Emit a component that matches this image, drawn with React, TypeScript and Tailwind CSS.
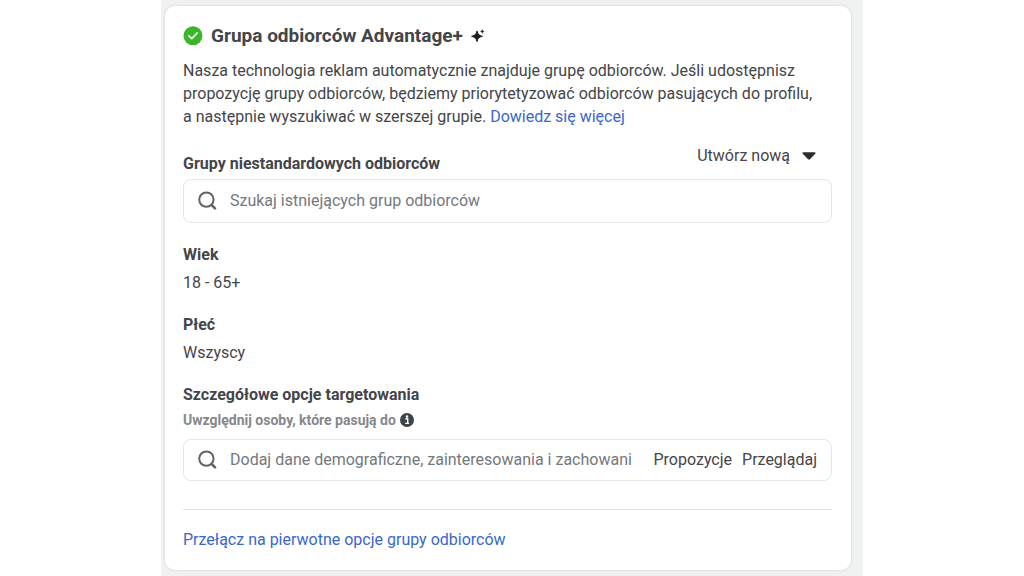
import React from "react";

function SearchIcon() {
  return (
    <svg viewBox="0 0 20 20" className="size-5 shrink-0" fill="none" stroke="#606469" aria-hidden="true">
      <circle cx="8.4" cy="8.6" r="7.2" strokeWidth="2" />
      <path d="M13.8 14.2 17 17.4" strokeWidth="2.6" strokeLinecap="round" />
    </svg>
  );
}

function CheckIcon() {
  return (
    <svg viewBox="0 0 20 20" className="size-5 shrink-0" aria-hidden="true">
      <circle cx="10" cy="9.8" r="9.5" fill="#3bb52b" />
      <path d="M5.8 9.8 8.8 12.6 14.2 6.9" fill="none" stroke="#dcf7d7" strokeWidth="1.8" strokeLinecap="round" strokeLinejoin="round" />
    </svg>
  );
}

function SparkleIcon() {
  return (
    <svg viewBox="0 0 14 14" className="size-3.5 shrink-0" fill="#1c1e21" aria-hidden="true">
      <path d="M6 2C6.9 5.4 7.7 6.4 11.4 7.3 7.7 8.2 6.9 9.2 6 12.6 5.1 9.2 4.3 8.2.6 7.3 4.3 6.4 5.1 5.4 6 2Z" stroke="#1c1e21" strokeWidth="1" strokeLinejoin="round" />
      <path d="M11.3.6c.3 1.3.6 1.6 1.9 1.9-1.3.3-1.6.6-1.9 1.9-.3-1.3-.6-1.6-1.9-1.9 1.3-.3 1.6-.6 1.9-1.9Z" stroke="#1c1e21" strokeWidth=".4" />
    </svg>
  );
}

function InfoIcon() {
  return (
    <svg viewBox="0 0 14 14" className="size-3.5 shrink-0" aria-hidden="true">
      <circle cx="7" cy="7" r="7" fill="#3f434a" />
      <circle cx="7" cy="3.5" r="1.2" fill="#fff" />
      <path d="M5.3 5.8h2.4v4.3M5.2 10.4h3.8" fill="none" stroke="#fff" strokeWidth="1.4" />
    </svg>
  );
}

function Field({ label, value }: { label: string; value: string }) {
  return (
    <div className="mb-[18px]">
      <dt className="font-bold leading-6">{label}</dt>
      <dd className="mt-1 leading-6">{value}</dd>
    </div>
  );
}

const inputBox =
  "flex items-center gap-3 rounded-lg border border-[#e3e5e6] bg-white pl-3.5 pr-3.5 focus-within:border-[#3a66cf]";
const inputText =
  "min-w-0 flex-1 bg-transparent leading-6 outline-none placeholder:text-[#74787d]";

export default function App() {
  return (
    <main className="min-h-screen bg-white px-[161px] font-['Roboto','Liberation_Sans',sans-serif] text-base text-[#444549]">
      <div className="bg-[#f0f2f2] pt-1.5 pb-1.5 pl-1 pr-3">
        <section className="rounded-[10px] bg-white pt-[18px] pr-[19px] pb-[18px] pl-[18px] shadow-[0_0_3px_rgba(0,0,0,0.14)]">
          <h2 className="flex items-center gap-2 text-[19px] font-bold leading-6">
            <CheckIcon />
            <span>Grupa odbiorców Advantage+</span>
            <SparkleIcon />
          </h2>
          <p className="mt-[11px] leading-[23px]">
            Nasza technologia reklam automatycznie znajduje grupę odbiorców. Jeśli udostępnisz propozycję grupy
            odbiorców, będziemy priorytetyzować odbiorców pasujących do profilu, a{"\u00a0"}następnie wyszukiwać w
            szerszej grupie. <a href="#wiecej" className="text-[#3a66cf]">Dowiedz się więcej</a>
          </p>

          <div className="mt-4 flex items-start justify-between pr-4">
            <label htmlFor="groups" className="mt-2 font-bold leading-6">
              Grupy niestandardowych odbiorców
            </label>
            <button type="button" className="flex items-center gap-3 leading-6">
              Utwórz nową
              <svg viewBox="0 0 14 8" className="h-2 w-3.5" fill="#2b2c2f" aria-hidden="true">
                <path d="M1.3.3h11.4c.9 0 1.1.8.5 1.4L8.2 6.9c-.7.8-1.7.8-2.4 0L.8 1.7C.2 1.1.4.3 1.3.3Z" />
              </svg>
            </button>
          </div>
          <div className={`${inputBox} mt-[3px] h-11`}>
            <SearchIcon />
            <input id="groups" type="text" placeholder="Szukaj istniejących grup odbiorców" className={inputText} />
          </div>

          <dl className="mt-5">
            <Field label="Wiek" value="18 - 65+" />
            <Field label="Płeć" value="Wszyscy" />
          </dl>

          <label htmlFor="targeting" className="block font-bold leading-6">
            Szczegółowe opcje targetowania
          </label>
          <div className="mt-1 flex items-center gap-1 text-sm font-bold leading-[18px] text-[#85888c]">
            Uwzględnij osoby, które pasują do
            <InfoIcon />
          </div>
          <div className={`${inputBox} mt-2.5 h-[42px]`}>
            <SearchIcon />
            <input
              id="targeting"
              type="text"
              placeholder="Dodaj dane demograficzne, zainteresowania i zachowani"
              className={inputText}
            />
            <div className="flex gap-2.5">
              <button type="button" className="leading-6">Propozycje</button>
              <button type="button" className="leading-6">Przeglądaj</button>
            </div>
          </div>

          <hr className="mt-7 border-[#dfe1e2]" />
          <a href="#pierwotne" className="mt-[18px] block leading-6 text-[#3a66cf]">
            Przełącz na pierwotne opcje grupy odbiorców
          </a>
        </section>
      </div>
    </main>
  );
}
